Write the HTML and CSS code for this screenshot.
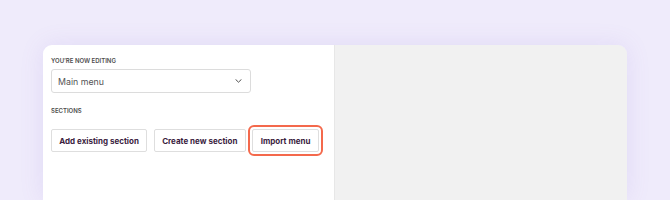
FILE: index.html
```html
<!DOCTYPE html>
<html lang="en">

<head>
    <meta charset="UTF-8">
    <meta name="viewport" content="width=device-width, initial-scale=1.0">
    <title>Menu editor</title>
    <link rel="stylesheet" href="styles.css">
</head>

<body>
    <div class="card">
        <div class="panel">
            <div class="label">You’re now editing</div>
            <div class="select">
                <span>Main menu</span>
                <svg class="chevron" width="7" height="4" viewBox="0 0 7 4">
                    <path d="M0.8 0.6 L3.5 3.2 L6.2 0.6" fill="none" stroke="#4f4f4f" stroke-width="1" stroke-linecap="round" stroke-linejoin="round" />
                </svg>
            </div>
            <div class="label sections">Sections</div>
            <div class="buttons">
                <button class="btn">Add existing section</button>
                <button class="btn">Create new section</button>
                <button class="btn highlight">Import menu</button>
            </div>
        </div>
        <div class="preview"></div>
    </div>
</body>

</html>
```

FILE: styles.css
```css
body {
    margin: 0;
    background-color: #efebfb;
    font-family: Inter, "Noto Sans", sans-serif;
    height: 200px;
    overflow: hidden;
}

.card {
    display: flex;
    margin: 45px 0 0 43px;
    width: 584px;
    height: 155px;
    border-radius: 9px 9px 0 0;
    overflow: hidden;
    box-shadow: 0 0 24px rgba(130, 100, 210, 0.12);
}

.panel {
    width: 291px;
    padding: 12px 8px 0 8px;
    background-color: #fff;
    box-sizing: border-box;
}

.preview {
    flex: 1;
    background-color: #f1f1f1;
    border-left: 1.5px solid #e7e7e7;
}

.label {
    font-size: 6px;
    font-weight: 600;
    text-transform: uppercase;
    color: #4d4d4d;
    line-height: 8px;
}

.select {
    display: flex;
    align-items: center;
    justify-content: space-between;
    margin-top: 4px;
    width: 200px;
    height: 24px;
    padding: 0 8px 0 6px;
    box-sizing: border-box;
    border: 1px solid #dcdcdc;
    border-radius: 3px;
    font-size: 8.8px;
    color: #555;
}

.sections {
    margin-top: 14px;
}

.buttons {
    display: flex;
    gap: 6.75px;
    margin-top: 14px;
}

.btn {
    flex-shrink: 0;
    white-space: nowrap;
    height: 23px;
    padding: 0 7.25px;
    background-color: #fff;
    border: 1px solid #dedede;
    border-radius: 2px;
    font-family: Inter, "Noto Sans", sans-serif;
    font-size: 8px;
    font-weight: 700;
    color: #3a1d3e;
}

.highlight {
    outline: 2px solid #f4694c;
    outline-offset: 2px;
    border-radius: 2px;
}
```
